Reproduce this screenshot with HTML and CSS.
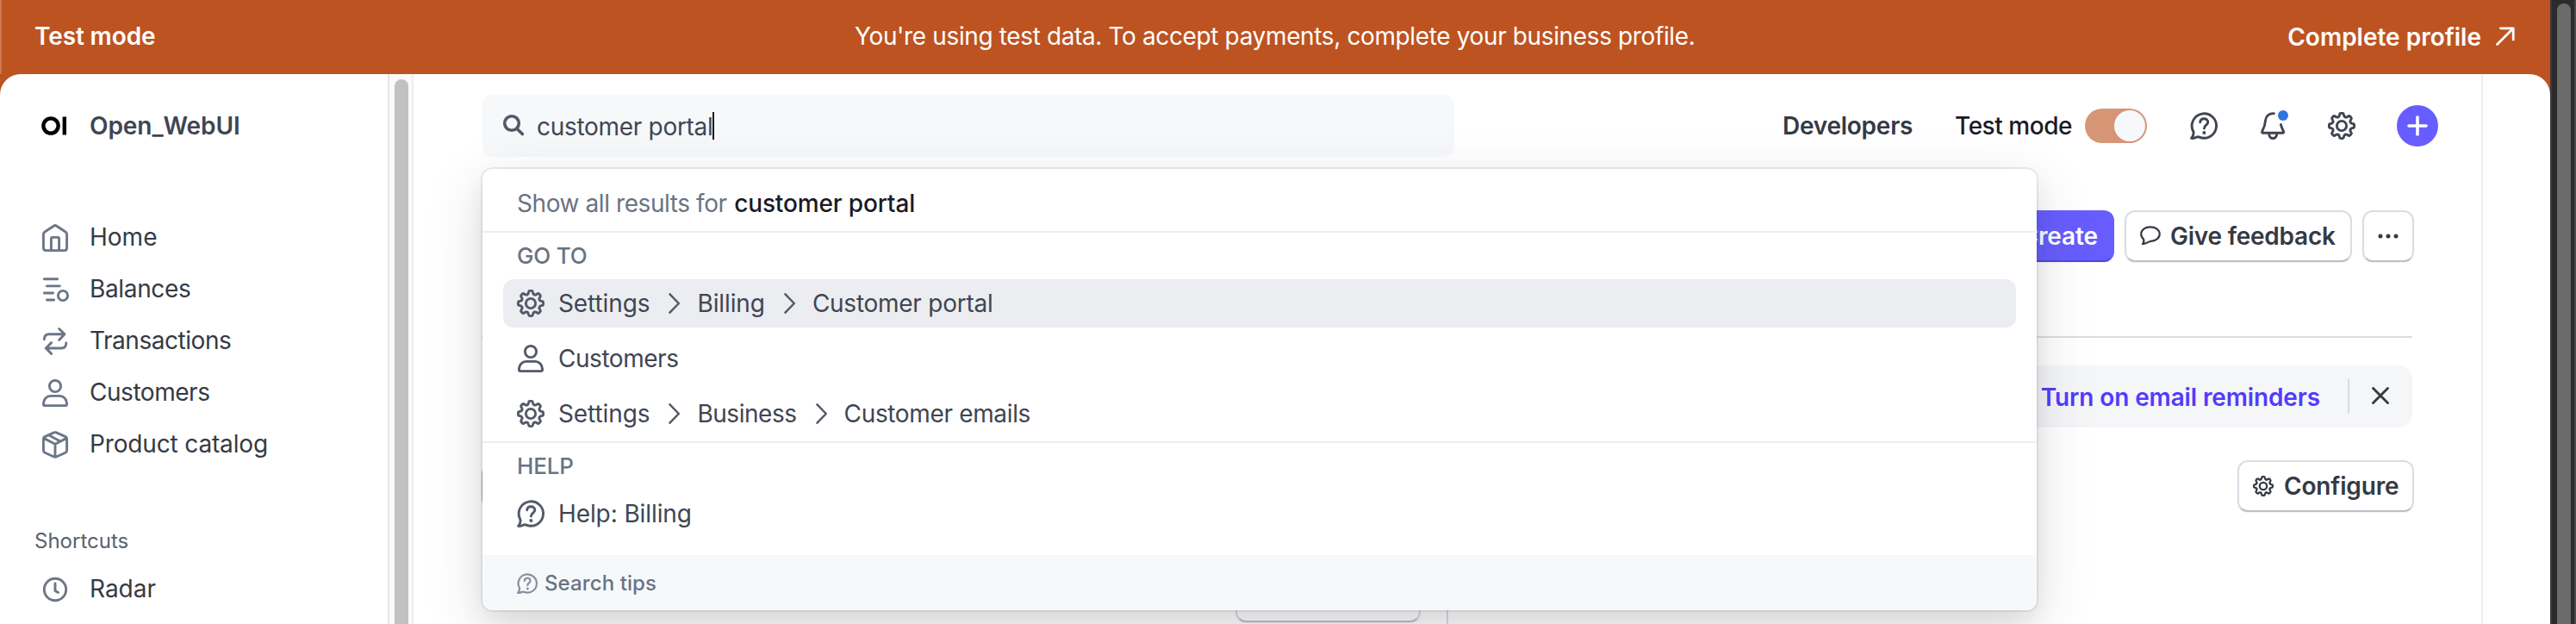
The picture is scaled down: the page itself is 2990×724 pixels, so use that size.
FILE: index.html
```html
<!DOCTYPE html>
<html lang="en">
<head>
<meta charset="utf-8">
<title>Customer portal search</title>
<link rel="stylesheet" href="styles.css">
</head>
<body>
<svg class="defs" width="0" height="0">
  <defs>
    <path id="tooth" d="M-4.21-10.16C-3.3-10.55-2.75-11-2.65-11.9L-2.45-13.1C-2.3-14.2-1.7-14.6-.8-14.6H.8C1.7-14.6 2.3-14.2 2.45-13.1L2.65-11.9C2.75-11 3.3-10.55 4.21-10.16"/>
    <symbol id="gear" viewBox="0 0 32 32">
      <g transform="translate(16 16)">
        <use href="#tooth"/><use href="#tooth" transform="rotate(45)"/><use href="#tooth" transform="rotate(90)"/><use href="#tooth" transform="rotate(135)"/>
        <use href="#tooth" transform="rotate(180)"/><use href="#tooth" transform="rotate(225)"/><use href="#tooth" transform="rotate(270)"/><use href="#tooth" transform="rotate(315)"/>
        <circle r="5.6"/>
      </g>
    </symbol>
    <symbol id="help" viewBox="0 0 32 32">
      <path d="M3.9 22.8A14.2 14.2 0 1 1 10.8 29.05C9.6 28.6 8.3 28.7 7.2 29.3 5.5 30.3 3.6 30.6 1.6 30.4 3.4 28.2 4.6 25.6 3.9 22.8Z"/>
      <path d="M11.7 11.9C11.8 9.2 13.8 7.7 16.3 7.7S20.8 9.3 20.8 11.8C20.8 15.2 16.4 15.2 16.4 19"/>
      <circle class="solid" cx="16.4" cy="24" r="2"/>
    </symbol>
    <symbol id="user" viewBox="0 0 32 32">
      <circle cx="16" cy="8" r="6.6"/>
      <path d="M2.4 28.5C2.4 23 6 19.4 11 19.4H21C26 19.4 29.6 23 29.6 28.5Q29.6 30.6 27.5 30.6H4.5Q2.4 30.6 2.4 28.5Z"/>
    </symbol>
    <symbol id="chevron" viewBox="0 0 14 24"><path d="M1.5 1.3L11.8 12 1.5 22.7"/></symbol>
  </defs>
</svg>

<div class="window">
  <div class="app">
    <header class="banner">
      <strong class="banner-mode">Test mode</strong>
      <span class="banner-text">You're using test data. To accept payments, complete your business profile.</span>
      <a class="banner-link">Complete profile
        <svg class="arrow" viewBox="0 0 22 22"><path d="M1.5 20.5L20 2M5.5 1.8H20.2V15"/></svg>
      </a>
    </header>

    <div class="page">
      <nav class="sidebar">
        <div class="account">
          <svg class="logo" viewBox="0 0 30 22"><circle cx="11" cy="11" r="8.6"/><path d="M26.8 0.6V21.4"/></svg>
          <span class="account-name">Open_WebUI</span>
        </div>
        <div class="nav-list">
          <a class="nav-item"><svg class="icon" viewBox="0 0 32 32"><path d="M2.4 12Q2.4 10 4 9L14.3 2.2Q16 1 17.7 2.2L28 9Q29.6 10 29.6 12V27.5Q29.6 30.6 26.5 30.6H5.5Q2.4 30.6 2.4 27.5ZM11.4 30V17Q11.4 15.4 13 15.4H19Q20.6 15.4 20.6 17V30"/></svg><span>Home</span></a>
          <a class="nav-item"><svg class="icon" viewBox="0 0 32 32"><path d="M3.4 3.7H18.6M6.4 11.9H21.3M3.4 20H13.6M6.4 28H14.6"/><circle cx="25" cy="23" r="5.6"/></svg><span class="tight-3">Balances</span></a>
          <a class="nav-item"><svg class="icon" viewBox="0 0 32 32"><path d="M3.3 13.8C3.3 10 5.5 7.7 9 7.7H26.5M20.6 1.5L27 7.7 20.6 14.5M28.8 18C28.8 21.8 26.5 24 23 24H5.5M11.6 17.6L5.2 24 11.6 30.4"/></svg><span class="tight-4">Transactions</span></a>
          <a class="nav-item"><svg class="icon"><use href="#user"/></svg><span class="tight-4">Customers</span></a>
          <a class="nav-item"><svg class="icon" viewBox="0 0 32 32"><path d="M14.6 1.9Q16 1.3 17.4 1.9L27.9 6.6Q29.6 7.4 29.6 9.2V22.6Q29.6 24.4 27.9 25.2L17.4 30Q16 30.6 14.6 30L4.1 25.2Q2.4 24.4 2.4 22.6V9.2Q2.4 7.4 4.1 6.6ZM3.2 8.6L16 15.2 28.8 8.6M16 15.2V30M9.4 5.2L21.4 11.8"/></svg><span class="tight-1">Product catalog</span></a>
        </div>
        <div class="nav-heading">Shortcuts</div>
        <a class="nav-item"><svg class="icon" viewBox="0 0 32 32"><circle cx="16" cy="16" r="12.7"/><path d="M16 9V17.4L19.6 19.4"/></svg><span>Radar</span></a>
      </nav>
      <div class="side-track"><div class="side-thumb"></div></div>

      <main class="main">
        <div class="topbar">
          <div class="search">
            <svg class="search-icon" viewBox="0 0 24 24"><circle cx="10" cy="10" r="8.3"/><path d="M16.2 16.4L22.4 22.6"/></svg>
            <span class="query">customer portal</span><i class="caret"></i>
          </div>
          <div class="tools">
            <a class="developers">Developers</a>
            <span class="mode">Test mode</span>
            <span class="toggle"><i></i></span>
            <svg class="icon tool-help"><use href="#help"/></svg>
            <svg class="icon tool-bell" viewBox="0 0 32 32"><path d="M15.4 1.6C9.8 1.4 6.2 4.6 5.6 9.5 5.2 14.2 4.4 17.6 1.9 22 1.1 23.6 1.7 24.3 3 24.3H25.2C26.6 24.3 27 23.4 26.4 22.2 25 19.4 24.2 17.4 23.4 14.6"/><path d="M9.7 25C9.7 32.4 18.7 32.4 18.7 25"/><circle class="dot" cx="26" cy="4" r="6"/></svg>
            <svg class="icon tool-gear"><use href="#gear"/></svg>
            <svg class="plus" viewBox="0 0 48 48"><circle cx="24" cy="24" r="24"/><path d="M14 24H34M24 14V34"/></svg>
          </div>
        </div>

        <div class="content">
          <div class="actions">
            <button class="btn primary">Create</button>
            <button class="btn feedback"><svg class="bubble" viewBox="0 0 24 24"><path d="M12 1.4C18 1.4 22.7 4.4 22.7 9.4S18 17.6 12.6 17.8C9.8 18 8 20.8 3 21.2 4.4 19.4 4.8 17.4 4 15.4 2.2 13.9 1.2 12 1.2 9.6 1.2 4.6 6 1.4 12 1.4Z"/></svg><span>Give feedback</span></button>
            <button class="btn more"><svg viewBox="0 0 24 6"><circle cx="3" cy="3" r="2.5"/><circle cx="12" cy="3" r="2.5"/><circle cx="21" cy="3" r="2.5"/></svg></button>
          </div>
          <div class="rule"></div>
          <div class="notice">
            <a class="notice-link">Turn on email reminders</a>
            <i class="notice-split"></i>
            <svg class="close" viewBox="0 0 20 20"><path d="M1.5 1.5L18.5 18.5M18.5 1.5L1.5 18.5"/></svg>
          </div>
          <div class="filters">
            <button class="btn filter"></button>
            <button class="btn configure"><svg class="icon small"><use href="#gear"/></svg><span>Configure</span></button>
          </div>
          <div class="columns"><div class="column"><button class="btn column-btn"></button></div></div>
        </div>

        <div class="results">
          <div class="show-all">Show all results for <b>customer portal</b></div>
          <div class="group">
            <div class="group-title">GO TO</div>
            <div class="result selected"><svg class="icon"><use href="#gear"/></svg><span class="name">Settings</span><svg class="chev"><use href="#chevron"/></svg><span class="name">Billing</span><svg class="chev"><use href="#chevron"/></svg><span class="name tight-2">Customer portal</span></div>
            <div class="result"><svg class="icon"><use href="#user"/></svg><span class="name tight-4">Customers</span></div>
            <div class="result"><svg class="icon"><use href="#gear"/></svg><span class="name">Settings</span><svg class="chev"><use href="#chevron"/></svg><span class="name tight-4">Business</span><svg class="chev"><use href="#chevron"/></svg><span class="name tight-3">Customer emails</span></div>
          </div>
          <div class="group help-group">
            <div class="group-title">HELP</div>
            <div class="result"><svg class="icon"><use href="#help"/></svg><span class="name tight-1">Help: Billing</span></div>
          </div>
          <div class="tips"><svg class="icon small"><use href="#help"/></svg><span>Search tips</span></div>
        </div>
      </main>
      <div class="gutter"></div>
    </div>
  </div>
  <div class="scroll"><div class="scroll-thumb"></div></div>
</div>
</body>
</html>
```
FILE: styles.css
```css
* { box-sizing: border-box; }
body { margin: 0; font-family: Inter, "Liberation Sans", sans-serif; font-size: 28px; line-height: 34px; color: #353a44; white-space: nowrap; overflow: hidden; }
svg { display: block; flex: none; overflow: visible; fill: none; stroke: currentColor; stroke-linecap: round; stroke-linejoin: round; }
.defs { position: absolute; }
i { display: block; flex: none; }
.icon { width: 32px; height: 32px; stroke-width: 2.9; }
.icon.small { width: 24px; height: 24px; }
.solid { fill: currentColor; stroke: none; }
.tight-1 { letter-spacing: -.15px; }
.tight-2 { letter-spacing: -.26px; }
.tight-3 { letter-spacing: -.35px; }
.tight-4 { letter-spacing: -.46px; }

.window { display: flex; width: 2990px; height: 724px; overflow: hidden; }
.app { width: 2960px; background: #bd5321; display: flex; flex-direction: column; }

.banner { height: 86px; flex: none; display: grid; grid-template-columns: 952px 1fr auto; align-items: center; padding: 0 41px 2px 38px; border-left: 2px solid #c87850; color: #fff; }
.banner-mode { font-weight: 600; letter-spacing: -.11px; }
.banner-text { letter-spacing: -.37px; }
.banner-link { display: flex; align-items: center; gap: 17px; font-weight: 600; padding-top: 2px; }
.arrow { width: 22px; height: 22px; stroke-width: 2.8; margin-top: -2px; }

.page { flex: 1; min-height: 0; display: flex; background: #fff; border-radius: 24px 24px 0 0; overflow: hidden; }
.sidebar { width: 450px; padding: 30px 0 0 48px; color: #353a44; }
.account { height: 60px; display: flex; align-items: center; }
.logo { width: 30px; height: 22px; margin-right: 25px; color: #000; stroke-width: 4.4; stroke-linecap: butt; }
.account-name { font-weight: 600; color: #414552; letter-spacing: -.07px; padding-left: 1px; }
.nav-list { margin-top: 70px; }
.nav-item { height: 60px; display: flex; align-items: center; gap: 24px; }
.nav-item .icon { color: #6c7688; }
.nav-item span { margin-top: -2px; }
.nav-heading { margin: 62px 0 6px -8px; height: 40px; line-height: 40px; font-size: 24px; color: #596171; }
.side-track { width: 30px; flex: none; border-left: 2px solid #e6e6e6; border-right: 2px solid #ededf2; background: #fafafa; padding: 6px 4px 0 6px; }
.side-thumb { width: 16px; height: 900px; border-radius: 8px; background: #c1c1c1; }

.main { width: 2400px; flex: none; position: relative; padding-left: 80px; }
.gutter { flex: 1; border-left: 2px solid #ebeef1; }
.topbar { height: 120px; display: flex; align-items: center; justify-content: space-between; padding-right: 50px; }
.search { width: 1128px; height: 72px; border-radius: 12px; background: #f6f8fa; display: flex; align-items: center; padding-left: 24px; color: #414552; }
.search-icon { width: 24px; height: 24px; stroke-width: 3.6; color: #545969; margin: -2px 15px 0 0; }
.query { letter-spacing: -.3px; padding-top: 1px; }
.caret { width: 2px; height: 32px; background: #1a1b25; margin-left: -1px; }
.tools { display: flex; align-items: center; color: #414552; }
.developers { width: 200px; padding-left: 1px; font-weight: 600; letter-spacing: -.25px; color: #353a44; }
.mode { width: 152px; padding-left: 1px; font-weight: 500; letter-spacing: -.46px; color: #1a1b25; }
.toggle { width: 72px; height: 40px; border-radius: 20px; background: #d69676; padding: 2px; display: flex; justify-content: flex-end; }
.toggle i { width: 36px; height: 36px; border-radius: 50%; background: #f7f8fb; }
.tool-help, .tool-bell { margin-left: 50px; }
.tool-gear { margin-left: 46px; }
.dot { fill: #2f74e0; stroke: none; }
.plus { width: 48px; height: 48px; margin-left: 48px; stroke: #fff; stroke-width: 3.6; }
.plus circle { fill: #675dff; stroke: none; }

.content { padding: 38px 78px 0 0; }
.btn { height: 60px; border: 2px solid #d8dee4; border-bottom-color: #bbc0c6; border-radius: 12px; background: #fff; font: 600 28px/34px Inter, "Liberation Sans", sans-serif; color: #353a44; display: flex; align-items: center; padding: 0; box-shadow: 0 1px 1px rgba(0,0,0,.05); }
.actions { display: flex; justify-content: flex-end; gap: 12px; }
.primary { width: 151px; padding: 0 17px 0 0; justify-content: flex-end; background: #675dff; border-color: #675dff #675dff #5348d6; color: #fff; letter-spacing: -.1px; }
.feedback { width: 264px; gap: 11px; padding-left: 16px; letter-spacing: -.23px; }
.bubble { width: 24px; height: 24px; stroke-width: 2.2; }
.more { width: 60px; justify-content: center; }
.more svg { width: 24px; height: 6px; fill: currentColor; stroke: none; }
.rule { height: 2px; background: #d8dee4; margin: 86px 2px 32px -1px; }
.notice { height: 72px; margin-right: 2px; border-radius: 16px; background: #f5f6f8; display: flex; align-items: center; justify-content: flex-end; padding-right: 27px; }
.notice-link { font-weight: 600; color: #533afd; letter-spacing: -.13px; padding-top: 2px; }
.notice-split { width: 2px; height: 40px; background: #d8dce2; margin: 0 26px 0 32px; }
.close { width: 20px; height: 20px; stroke-width: 2.9; margin-top: -2px; }
.filters { margin: 38px 0 40px -1px; display: flex; justify-content: space-between; }
.filter { width: 220px; border-radius: 16px; border-color: #a9aeb8; }
.configure { width: 205px; gap: 12px; padding-left: 16px; letter-spacing: -.17px; }
.configure .icon { stroke-width: 3; }
.columns { display: flex; }
.column { width: 1121px; height: 100px; border-right: 2px solid #d8dee4; padding: 28px 30px 0 0; display: flex; justify-content: flex-end; }
.column-btn { width: 215px; }

.results { position: absolute; left: 80px; top: 110px; width: 1804px; height: 512px; border-radius: 12px; background: #fff; overflow: hidden; color: #414552; box-shadow: 0 0 0 2px rgba(64,68,82,.09), 0 14px 30px rgba(0,0,0,.08), 0 20px 70px rgba(48,49,61,.14); }
.show-all { height: 72px; line-height: 80px; padding-left: 40px; color: #6a7383; letter-spacing: -.42px; }
.show-all b { font-weight: 500; color: #1a1b25; letter-spacing: -.14px; margin-left: 1px; }
.group { height: 244px; border-top: 2px solid #ebeef1; padding: 0 24px; display: flex; flex-direction: column; gap: 8px; }
.group-title { height: 46px; line-height: 54px; font-size: 26px; font-weight: 500; letter-spacing: -.18px; color: #6a7383; padding-left: 16px; }
.result { height: 56px; flex: none; border-radius: 12px; display: flex; align-items: center; padding-left: 16px; }
.result .icon { color: #545969; margin-right: 16px; }
.result .name { letter-spacing: -.1px; }
.result .name.tight-2 { letter-spacing: -.26px; }
.result .name.tight-3 { letter-spacing: -.35px; }
.result .name.tight-4 { letter-spacing: -.46px; }
.selected { background: #ebedf1; }
.chev { width: 14px; height: 24px; margin: 0 19px 0 22px; stroke-width: 2.5; color: #545969; }
.help-group { height: 132px; }
.tips { height: 64px; background: #f6f8fa; display: flex; align-items: center; gap: 8px; padding: 2px 0 0 40px; font-size: 24px; font-weight: 500; letter-spacing: .1px; color: #687385; }
.tips .icon { color: #87909f; }

.scroll { width: 30px; flex: none; background: #2b2b2b; border-left: 2px solid #3a3a3a; border-right: 2px solid #4a4a4a; padding: 4px 0 0 6px; }
.scroll-thumb { width: 16px; height: 900px; border-radius: 8px; background: #6b6b6b; }
```
